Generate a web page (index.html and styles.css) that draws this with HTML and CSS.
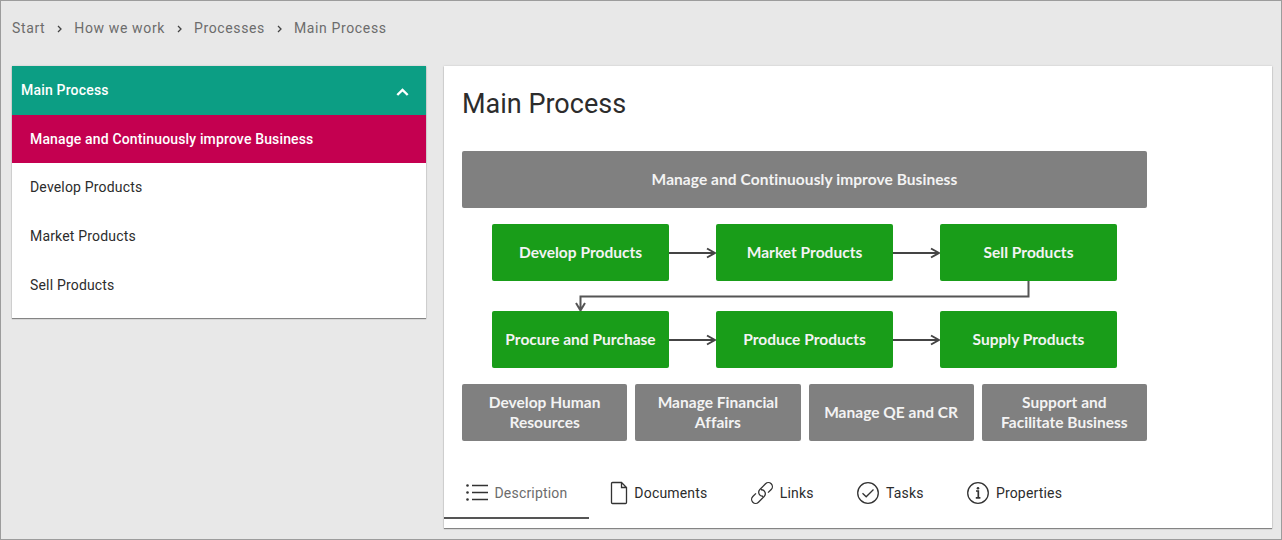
FILE: index.html
```html
<!DOCTYPE html>
<html lang="en">
<head>
<meta charset="utf-8">
<title>Main Process</title>
<link rel="stylesheet" href="styles.css">
</head>
<body>
<div class="page">
  <nav class="crumbs">
    <span>Start</span>
    <svg class="sep" viewBox="0 0 5 8"><path d="M1 1l3 3-3 3"/></svg>
    <span>How we work</span>
    <svg class="sep" viewBox="0 0 5 8"><path d="M1 1l3 3-3 3"/></svg>
    <span>Processes</span>
    <svg class="sep" viewBox="0 0 5 8"><path d="M1 1l3 3-3 3"/></svg>
    <span>Main Process</span>
  </nav>
  <div class="columns">
    <aside class="card menu">
      <div class="menu-head"><span>Main Process</span>
        <svg class="caret" viewBox="0 0 13 8"><path d="M1.3 7l5.2-5 5.2 5"/></svg>
      </div>
      <div class="menu-item active">Manage and Continuously improve Business</div>
      <div class="menu-item">Develop Products</div>
      <div class="menu-item">Market Products</div>
      <div class="menu-item">Sell Products</div>
    </aside>
    <main class="card content">
      <h1>Main Process</h1>
      <div class="diagram">
        <div class="box grey wide">Manage and Continuously improve Business</div>
        <div class="flow first">
          <div class="box green">Develop Products</div>
          <svg class="arrow" viewBox="0 0 47 12"><path d="M0 6H45M38 1.5l8 4.5-8 4.5"/></svg>
          <div class="box green">Market Products</div>
          <svg class="arrow" viewBox="0 0 47 12"><path d="M0 6H45M38 1.5l8 4.5-8 4.5"/></svg>
          <div class="box green">Sell Products</div>
        </div>
        <svg class="connector" viewBox="0 0 685 30"><path d="M566.5 0V15.5H118.5V29M114 22l4.5 7.5 4.5-7.5"/></svg>
        <div class="flow">
          <div class="box green">Procure and Purchase</div>
          <svg class="arrow" viewBox="0 0 47 12"><path d="M0 6H45M38 1.5l8 4.5-8 4.5"/></svg>
          <div class="box green">Produce Products</div>
          <svg class="arrow" viewBox="0 0 47 12"><path d="M0 6H45M38 1.5l8 4.5-8 4.5"/></svg>
          <div class="box green">Supply Products</div>
        </div>
        <div class="support">
          <div class="box grey">Develop Human<br>Resources</div>
          <div class="box grey">Manage Financial<br>Affairs</div>
          <div class="box grey">Manage QE and CR</div>
          <div class="box grey">Support and<br>Facilitate Business</div>
        </div>
      </div>
      <div class="tabs">
        <div class="tab selected">
          <svg class="icon list" viewBox="0 0 24 24"><path d="M7 4.5h16M7 11.5h16M7 18.5h16"/><g class="dots"><circle cx="2.5" cy="4.5" r="1.3"/><circle cx="2.5" cy="11.5" r="1.3"/><circle cx="2.5" cy="18.5" r="1.3"/></g></svg>
          <span>Description</span>
        </div>
        <div class="tab">
          <svg class="icon doc" viewBox="0 0 18 24"><path d="M2.5 1.5h9l5 5v15a1 1 0 0 1-1 1h-13a1 1 0 0 1-1-1v-19a1 1 0 0 1 1-1zM11.5 1.5v5h5"/></svg>
          <span>Documents</span>
        </div>
        <div class="tab">
          <svg class="icon" viewBox="0 0 24 24"><g transform="rotate(-45 12 12)"><path d="M16.5 16h4.5a4 4 0 0 0 0-8h-8a4 4 0 0 0-2.6 7M7.5 8h-4.500a4 4 0 0 0 0 8h8a4 4 0 0 0 2.600-7"/></g></svg>
          <span>Links</span>
        </div>
        <div class="tab">
          <svg class="icon" viewBox="0 0 24 24"><circle cx="12" cy="12" r="10.3"/><path d="M6.500 12.200l3.700 3.600 7.300-7.300"/></svg>
          <span>Tasks</span>
        </div>
        <div class="tab">
          <svg class="icon" viewBox="0 0 24 24"><circle cx="12" cy="12" r="10.3"/><path class="stem" d="M10 10h2.300v6.500M9.800 16.800h4.600"/><circle class="fill" cx="12" cy="7.300" r="1.300"/></svg>
          <span>Properties</span>
        </div>
      </div>
    </main>
  </div>
</div>
</body>
</html>
```
FILE: styles.css
```css
* { box-sizing: border-box; }
body { margin: 0; font-family: Roboto, "Liberation Sans", sans-serif; font-size: 14px; color: #2c2c2c; }
svg { display: block; flex: none; fill: none; stroke: #333; }
.page { width: 1282px; height: 540px; padding: 0 9px 0 11px; border: 1px solid #9c9c9c; background: #e8e8e8; overflow: hidden; }
.crumbs { display: flex; align-items: center; height: 65px; padding-bottom: 11px; color: #6c6c6c; letter-spacing: .63px; }
.sep { width: 5px; height: 8px; margin: 2px 12px 0 12px; stroke: #444; stroke-width: 1.3; }
.columns { display: flex; align-items: flex-start; gap: 18px; }
.card { background: #fff; box-shadow: 0 1px 1px rgba(0,0,0,.4), 0 0 2px rgba(0,0,0,.15); }
.menu { width: 414px; height: 252px; letter-spacing: .18px; }
.menu-head { display: flex; align-items: center; justify-content: space-between; height: 49px; padding: 0 17px 1px 9px; background: #0c9e84; color: #fff; font-weight: 500; }
.caret { width: 13px; height: 8px; margin-top: 3px; stroke: #fff; stroke-width: 2.4; }
.menu-item { height: 49px; padding-left: 18px; line-height: 49px; }
.active { height: 48px; line-height: 48px; background: #c40050; color: #fff; font-weight: 500; letter-spacing: .15px; }
.content { width: 828px; height: 462px; }
h1 { margin: 0; padding: 20px 18px 0; height: 85px; font-size: 27px; line-height: 36px; font-weight: 400; letter-spacing: 0; }
.diagram { width: 685px; margin-left: 18px; color: #f3f3f3; font: bold 15.5px/20px Lato, "Liberation Sans", sans-serif; letter-spacing: .02px; }
.box { display: flex; align-items: center; justify-content: center; height: 57px; padding-bottom: 1px; border-radius: 2px; text-align: center; white-space: nowrap; }
.wide { letter-spacing: .07px; }
.grey { background: #808080; }
.green { width: 177px; background: #199d19; }
.flow { display: flex; align-items: center; padding-left: 30px; }
.first { margin-top: 16px; }
.arrow { width: 47px; height: 12px; stroke: #444; stroke-width: 2; }
.connector { width: 685px; height: 30px; stroke: #555; stroke-width: 2; }
.support { display: grid; grid-template-columns: repeat(4, 1fr); gap: 8px; margin-top: 16px; }
.support .box { padding-bottom: 2px; }
.tabs { display: flex; margin-top: 26px; }
.tab { display: flex; align-items: center; height: 52px; padding: 0 21.3px 0 21px; letter-spacing: .18px; }
.tab.selected { padding: 2px 22px 0 20.5px; border-bottom: 2px solid #555; color: #6c6c6c; }
.icon { width: 24px; height: 24px; margin-right: 6px; stroke-width: 1.3; }
.doc { width: 18px; }
.stem { stroke-width: 1.700; }
.dots, .fill { fill: #333; stroke: none; }
```
